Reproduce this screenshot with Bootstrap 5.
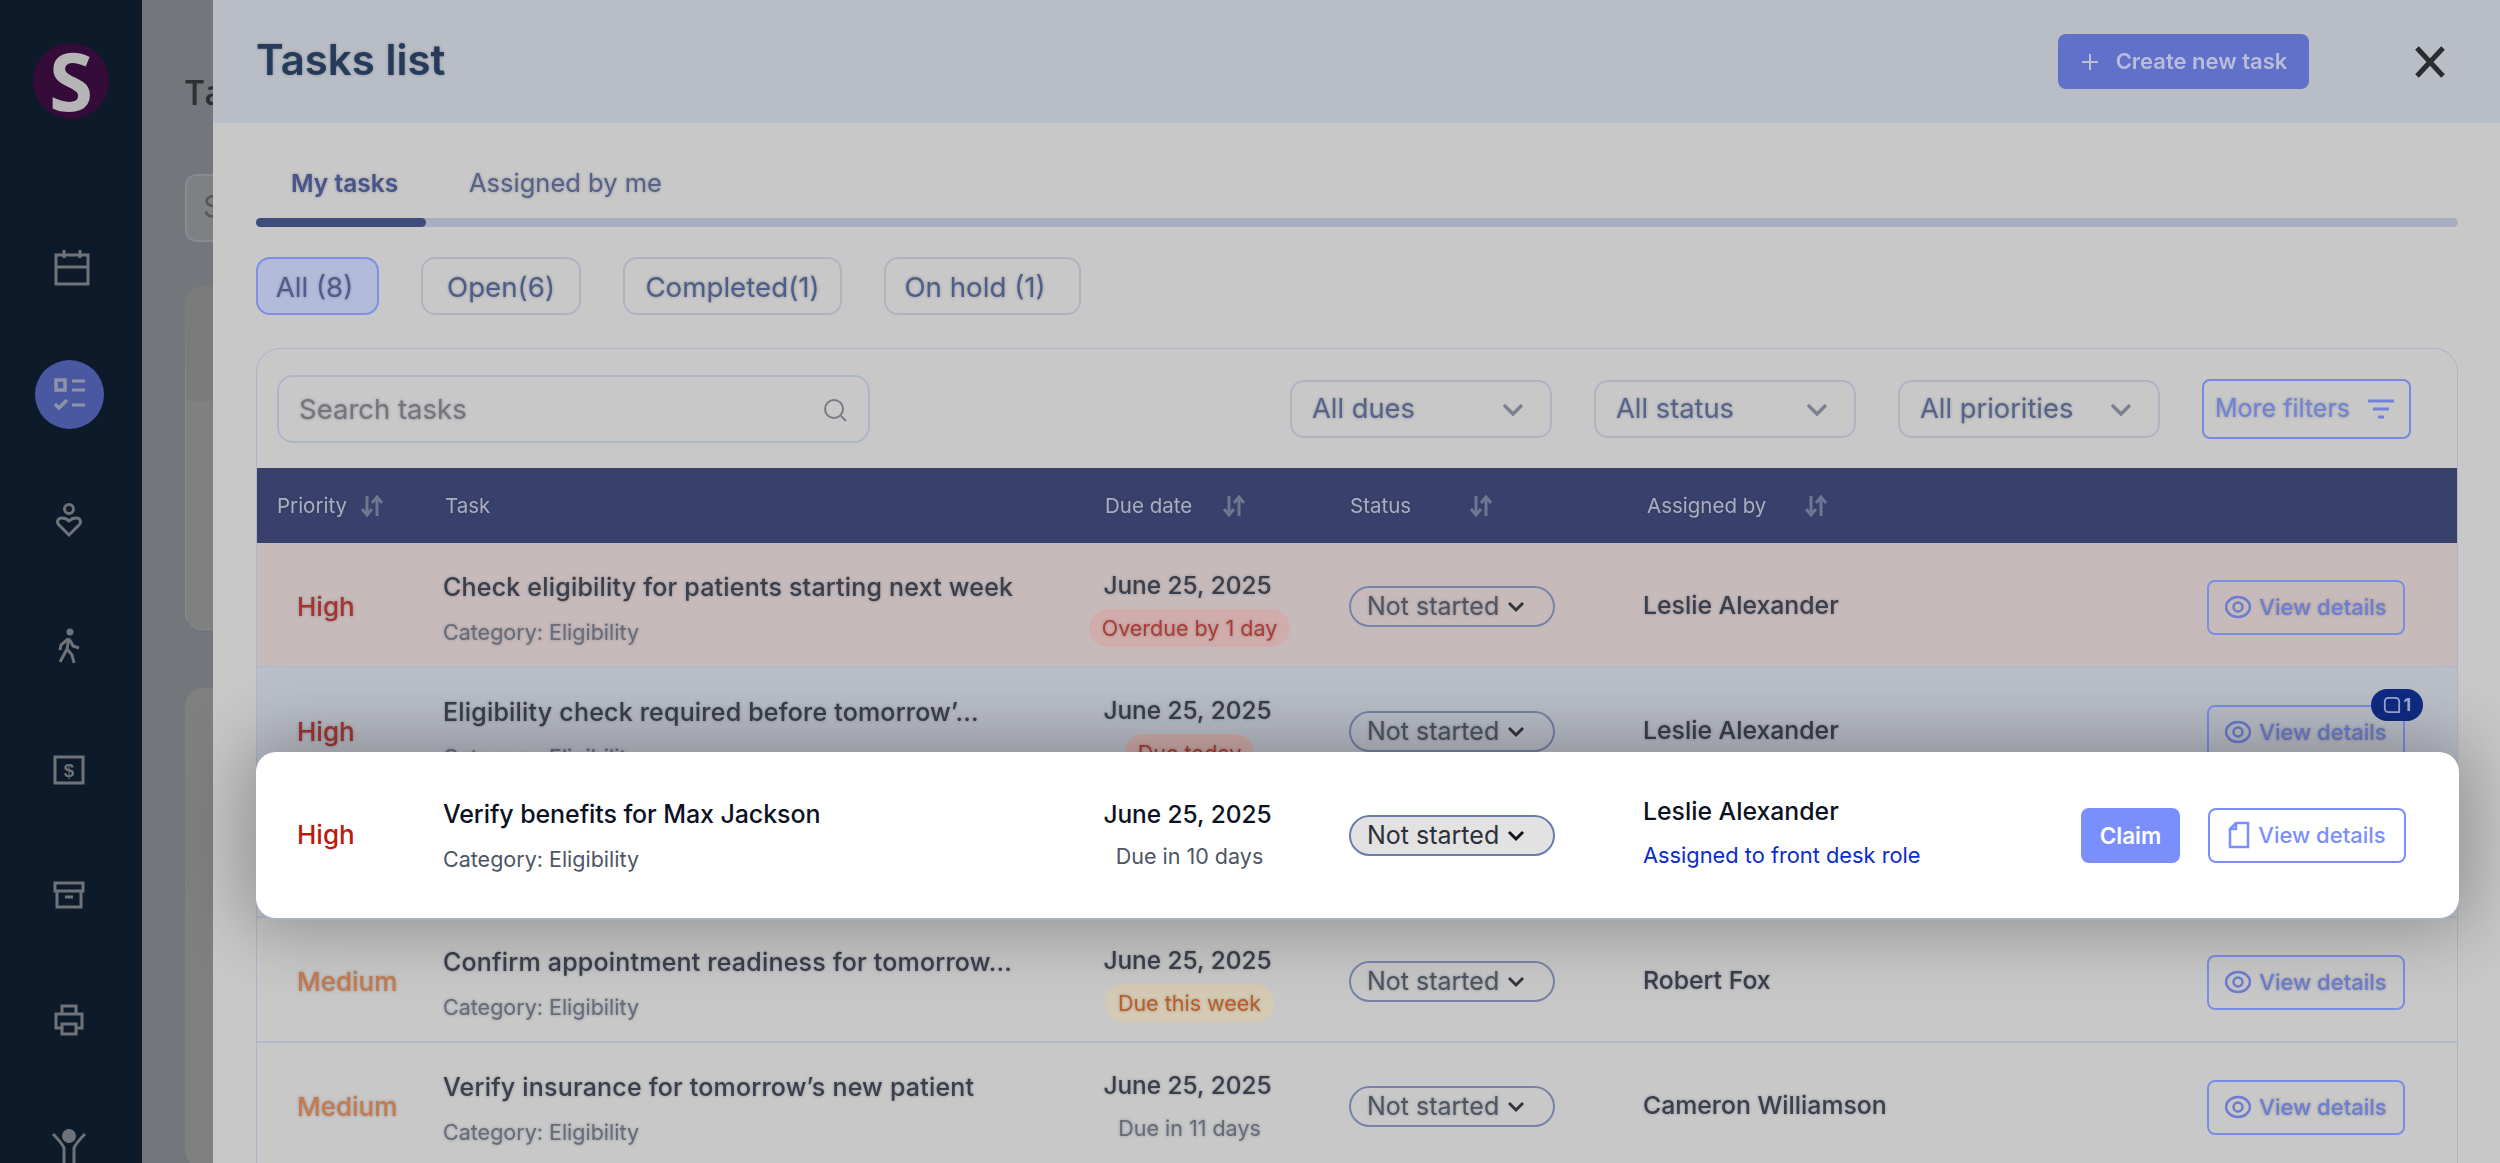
<!DOCTYPE html>
<html lang="en"><head><meta charset="utf-8"><title>Tasks list</title>
<link href="https://cdn.jsdelivr.net/npm/bootstrap@5.3.0/dist/css/bootstrap.min.css" rel="stylesheet">
<style>
html,body{height:1163px;overflow:hidden;background:#c8c8c8}
body{font-family:"Inter","Liberation Sans",sans-serif;color:#3d4350}
.scene{position:relative;width:2500px;height:1163px;overflow:hidden}
.dimmed{position:absolute;left:0;right:0;top:0;bottom:-12px;filter:blur(.7px);display:flex}
.side{width:142px;flex:none;background:#0c1a2a;color:#6e7379;position:relative;height:1175px}
.side-item{position:absolute;left:0;width:138px;display:flex;justify-content:center}
.cal-item{left:3px}
.logo{position:absolute;left:33px;top:43px;width:76px;height:76px;border-radius:50%;background:#350b3a;color:#b5b5b5;font:700 80px/74px "Open Sans",sans-serif;text-align:center}
.active-dot{position:absolute;left:35px;top:360px;width:69px;height:69px;border-radius:50%;background:#4a58a2;display:flex;align-items:center;justify-content:center}
.under{flex:1;background:#73777c;padding:74px 0 0 43px;color:#2e3033}
.under h2{font:600 34px/36px "Open Sans",sans-serif;margin:0}
.under-box{width:500px;height:68px;margin-top:64px;background:#7f8083;border:2px solid #888b8f;border-radius:12px;padding:8px 16px;font-size:30px;color:#55585c}
.under-card{width:500px;height:344px;margin-top:44px;background:#808080;border-radius:18px;border:1px solid #888b90;border-top-width:115px;border-top-color:#7b7b7c}
.under-card2{width:500px;height:480px;margin-top:58px;background:#808080;border-radius:18px}
.panel{position:absolute;left:213px;top:0;right:0;bottom:0;background:#c8c8c8;text-shadow:0 0 3px rgba(50,56,75,.4)}
.panel-head{height:123px;background:#b8bdc6;padding:0 55px 0 43px}
.panel-title{font:600 42px/48px "Inter",sans-serif;color:#263b59;margin:0 0 3px}
.create-btn{width:251px;height:55px;background:#6170c8;border:0;border-radius:8px;color:#b9bdd8;font:600 22px/55px "Inter",sans-serif;padding:0;margin-right:106px}
.close-x{color:#2a2c2f;display:flex}
.panel-body{padding:0 42px 0 43px}
.tab-row{padding-top:38px;height:95px}
.tab-item{font-size:25.5px;line-height:44px;color:#56628a;padding-left:35px;white-space:nowrap}
.tab-item.tab-on{font-weight:600;font-size:24.5px;color:#47558a;width:178px}
.track{height:9px;border-radius:5px;background:#a8aebf;margin-bottom:30px}
.track i{display:block;width:170px;height:9px;border-radius:5px;background:#3f4c7c}
.chips{gap:42px;margin-bottom:33px}
.chip{height:58px;border:2px solid #b0b4c0;border-radius:14px;background:transparent;font-size:27.7px;color:#4e5e8a;line-height:56px;text-align:center;white-space:nowrap}
.chip-all{width:123px;background:#b3bbdb;border-color:#7f90e2;padding-right:6px}
.chip-open{width:160px}
.chip-done{width:219px}
.chip-hold{width:197px;padding-right:15px}
.tbox{border:1px solid #aeb5ca;border-bottom:0;border-radius:24px 24px 0 0;height:900px}
.toolbar{height:119px;padding:0 46px 0 20px}
.searchbox{width:593px;height:68px;border:2px solid #aeb5c9;border-radius:16px;padding:2px 20px 0;font-size:27.5px;color:#74767c;margin-right:auto}
.selectbox{width:262px;height:58px;border:2px solid #b0b4c0;border-radius:14px;padding:2px 26px 0 20px;font-size:27.3px;color:#56648a;margin-right:42px;white-space:nowrap}
.filter-btn{width:209px;height:60px;border:2px solid #7788e0;border-radius:8px;padding:0 14px 0 11px;font-size:25px;color:#7082da;white-space:nowrap}
.task-grid{display:grid;grid-template-columns:185px 618px 258px 325px 1fr;align-items:center}
.thead{height:75px;background:#38416b;color:#a9aebf;font-size:20.5px;padding-top:2px}
.hd-priority{padding-left:20px}
.hd-task{padding-left:3px}
.hd-due{padding-left:45px}
.hd-status{padding-left:32px}
.hd-assigned{padding-left:4px}
.sort{margin-left:13px;vertical-align:-4px;color:#6f7690}
.hd-due .sort{margin-left:30px}
.hd-status .sort{margin-left:58px}
.hd-assigned .sort{margin-left:38px}
.trow{height:125px;border-bottom:2px solid #b4bacc;padding-top:3px}
.tint-red{background:#c7baba}
.tint-blue{background:#bbbfc8}
.prio{padding:2px 0 0 40px;font:500 26px/30px "Inter",sans-serif}
.prio-high{color:#a8342d}
.prio-med{color:#c87a4c}
.tcell{padding:6px 0 0 1px}
.tname{font-size:25px;letter-spacing:.2px;line-height:30px;font-weight:500;color:#3a3f4b;margin-bottom:15px;white-space:nowrap}
.tcat{font-size:21.5px;line-height:30px;color:#666c79}
.dcell{text-align:center;padding-top:4px;padding-right:3px}
.ddate{font-size:24.4px;line-height:30px;font-weight:500;color:#3a3f4b;margin-bottom:9px}
.dnote{display:inline-block;font-size:21.5px;line-height:38px;padding:0 13px;border-radius:19px;white-space:nowrap;color:#666c79;margin-left:4px}
.note-red{background:#d0adab;color:#b03a34}
.note-orange{background:#d5cab4;color:#bd5f24}
.scell{padding-left:32px}
.statuspill{display:inline-flex;align-items:center;width:206px;height:41px;border:2px solid #7783a8;border-radius:21px;padding:2px 0 0 16px;font-size:25px;color:#4f5561;margin-left:-1px;white-space:nowrap}
.statuspill svg{margin-left:8px}
.acell{padding-right:52px;display:flex;align-items:center;justify-content:space-between}
.aname{font-size:24.8px;line-height:30px;font-weight:500;color:#3a3f4b;white-space:nowrap}
.trow .aname{margin-top:-3px}
.detail-btn{position:relative;display:flex;align-items:center;justify-content:center;gap:8px;width:198px;height:55px;border:2px solid #7b8ee6;border-radius:8px;color:#6d7dcf;font-size:22px;font-weight:500;white-space:nowrap}
.trow .detail-btn{margin-top:2px}
.msg-badge{position:absolute;right:-20px;top:-18px;width:52px;height:32px;border-radius:16px;background:#0f2b84;color:#9da9d2;font-size:18px;font-weight:700;display:flex;align-items:center;justify-content:center;gap:3px}
.spot{position:absolute;left:256px;top:752px;width:2203px;height:166px;background:#fff;border-radius:20px;box-shadow:0 2px 0 #a9b0c4,0 0 70px 12px rgba(0,0,0,.28)}
.spot .task-grid{height:166px;margin-left:1px}
.spot .prio{color:#bd1a0e;padding:0 0 0 40px}
.spot .tcell{padding-top:3px}
.spot .tname{letter-spacing:-.1px}
.spot .tname,.spot .ddate,.spot .aname{color:#0c1224}
.spot .tcat,.spot .dnote{color:#4d5565}
.spot .dcell{padding-top:3px}
.spot .ddate{margin-bottom:8px}
.spot .statuspill{background:#e2e2e2;border-color:#6c7dab;color:#2c3038}
.spot .detail-btn{color:#7b8efc;border-color:#7b8efc;background:#fff}
.spot .acell{padding-right:53px}
.spot .stack{padding-bottom:4px}
.assign-note{font-size:21.8px;line-height:30px;color:#0a2bcb;margin-top:14px;white-space:nowrap}
.claim-btn{width:99px;height:55px;background:#7b8ffc;border-radius:8px;color:#fff;font-size:22.5px;font-weight:600;line-height:55px;text-align:center;margin-right:28px}
</style></head>
<body>
<div class="scene">
 <div class="dimmed">
  <aside class="side">
   <div class="logo">S</div>
   <div class="side-item cal-item" style="top:250px"><svg width="38" height="36" viewBox="0 0 38 36" fill="none" stroke="currentColor" stroke-width="3"><rect x="3" y="5" width="32" height="29"/><path d="M3 17h32M11 0v8M27 0v8"/></svg></div>
   <div class="active-dot"><svg width="34" height="34" viewBox="0 0 34 34" fill="none" stroke="#8e93a8" stroke-width="3"><rect x="3" y="2" width="9" height="10" stroke-width="3.5"/><path d="M19 3h13M19 12h13M19 27h13"/><path d="M2 26l4 4 8-8" stroke-width="3.5"/></svg></div>
   <div class="side-item" style="top:503px"><svg width="26" height="34" viewBox="0 0 26 34" fill="none" stroke="currentColor" stroke-width="3"><circle cx="13" cy="6" r="4.5"/><path d="M13 32L3 22c-3-3-1-7 3-7 3 0 5 1 7 3 2-2 4-3 7-3 4 0 6 4 3 7z"/></svg></div>
   <div class="side-item" style="top:628px"><svg width="24" height="36" viewBox="0 0 24 36" fill="none" stroke="currentColor" stroke-width="3"><circle cx="13" cy="4" r="3.5" fill="currentColor" stroke="none"/><path d="M12 10l-2 11 5 6 2 8M10 21l-7 13M11 11l-7 6-1 5M13 12l3 6 6 2"/></svg></div>
   <div class="side-item" style="top:755px"><svg width="32" height="30" viewBox="0 0 32 30" fill="none" stroke="currentColor" stroke-width="3"><rect x="2" y="2" width="28" height="26"/><text x="16" y="22" text-anchor="middle" font-size="19" font-weight="700" fill="currentColor" stroke="none" font-family="Liberation Sans">$</text></svg></div>
   <div class="side-item" style="top:881px"><svg width="32" height="28" viewBox="0 0 32 28" fill="none" stroke="currentColor" stroke-width="3"><rect x="2" y="2" width="28" height="8"/><path d="M4 10v16h24V10M12 16h8"/></svg></div>
   <div class="side-item" style="top:1004px"><svg width="32" height="32" viewBox="0 0 32 32" fill="none" stroke="currentColor" stroke-width="3"><path d="M9 10V2h14v8M9 24H3V10h26v14h-6"/><rect x="9" y="20" width="14" height="10"/></svg></div>
   <div class="side-item" style="top:1128px"><svg width="36" height="40" viewBox="0 0 36 40" fill="none" stroke="currentColor" stroke-width="3"><circle cx="18" cy="8" r="7" fill="currentColor" stroke="none"/><path d="M2 6c5 5 9 9 11 14v20M34 6c-5 5-9 9-11 14v20"/></svg></div>
  </aside>
  <main class="under">
   <h2>Tasks</h2>
   <div class="under-box">S</div>
   <div class="under-card"></div>
   <div class="under-card2"></div>
  </main>
  <section class="panel">
   <header class="panel-head d-flex align-items-center">
    <h1 class="panel-title me-auto">Tasks list</h1>
    <button class="create-btn d-flex align-items-center justify-content-center gap-3" type="button"><svg width="20" height="20" viewBox="0 0 20 20" stroke="currentColor" stroke-width="2"><path d="M10 2v16M2 10h16"/></svg>Create new task</button>
    <span class="close-x"><svg width="30" height="32" viewBox="0 0 30 32" stroke="currentColor" stroke-width="5"><path d="M2 2l26 28M28 2L2 30"/></svg></span>
   </header>
   <div class="panel-body">
    <div class="tab-row d-flex align-items-start">
     <div class="tab-item tab-on">My tasks</div><div class="tab-item">Assigned by me</div>
    </div>
    <div class="track"><i></i></div>
    <div class="chips d-flex">
     <div class="chip chip-all">All (8)</div><div class="chip chip-open">Open(6)</div><div class="chip chip-done">Completed(1)</div><div class="chip chip-hold">On hold (1)</div>
    </div>
    <div class="tbox">
     <div class="toolbar d-flex align-items-center">
      <div class="searchbox d-flex align-items-center justify-content-between">Search tasks<svg width="26" height="26" viewBox="0 0 26 26" fill="none" stroke="#777b84" stroke-width="2"><circle cx="12" cy="12" r="9"/><path d="M19 19l5 5"/></svg></div>
      <div class="selectbox d-flex align-items-center justify-content-between">All dues<svg width="22" height="14" viewBox="0 0 22 14" fill="none" stroke="#7a8192" stroke-width="3.5"><path d="M2 2l9 9 9-9"/></svg></div>
      <div class="selectbox d-flex align-items-center justify-content-between">All status<svg width="22" height="14" viewBox="0 0 22 14" fill="none" stroke="#7a8192" stroke-width="3.5"><path d="M2 2l9 9 9-9"/></svg></div>
      <div class="selectbox d-flex align-items-center justify-content-between">All priorities<svg width="22" height="14" viewBox="0 0 22 14" fill="none" stroke="#7a8192" stroke-width="3.5"><path d="M2 2l9 9 9-9"/></svg></div>
      <div class="filter-btn d-flex align-items-center justify-content-between">More filters<svg width="28" height="20" viewBox="0 0 28 20" fill="none" stroke="currentColor" stroke-width="3"><path d="M1 2h26M6 10h16M11 18h6"/></svg></div>
     </div>
     <div class="task-grid thead">
      <div class="hd-priority">Priority<svg class="sort" width="24" height="22" viewBox="0 0 24 22" fill="none" stroke="currentColor" stroke-width="3"><path d="M7 1v18M2 14l5 6 5-6M17 21V3M12 8l5-6 5 6"/></svg></div>
      <div class="hd-task">Task</div>
      <div class="hd-due">Due date<svg class="sort" width="24" height="22" viewBox="0 0 24 22" fill="none" stroke="currentColor" stroke-width="3"><path d="M7 1v18M2 14l5 6 5-6M17 21V3M12 8l5-6 5 6"/></svg></div>
      <div class="hd-status">Status<svg class="sort" width="24" height="22" viewBox="0 0 24 22" fill="none" stroke="currentColor" stroke-width="3"><path d="M7 1v18M2 14l5 6 5-6M17 21V3M12 8l5-6 5 6"/></svg></div>
      <div class="hd-assigned">Assigned by<svg class="sort" width="24" height="22" viewBox="0 0 24 22" fill="none" stroke="currentColor" stroke-width="3"><path d="M7 1v18M2 14l5 6 5-6M17 21V3M12 8l5-6 5 6"/></svg></div>
     </div>
     <div class="task-grid trow tint-red">
      <div class="prio prio-high">High</div>
      <div class="tcell"><div class="tname">Check eligibility for patients starting next week</div><div class="tcat">Category: Eligibility</div></div>
      <div class="dcell"><div class="ddate">June 25, 2025</div><span class="dnote note-red">Overdue by 1 day</span></div>
      <div class="scell"><span class="statuspill">Not started<svg width="18" height="12" viewBox="0 0 18 12" fill="none" stroke="#33363d" stroke-width="3"><path d="M2 2l7 7 7-7"/></svg></span></div>
      <div class="acell"><div class="aname">Leslie Alexander</div><div class="detail-btn"><svg width="26" height="24" viewBox="0 0 26 24" fill="none" stroke="currentColor" stroke-width="2.5"><ellipse cx="13" cy="12" rx="12" ry="10"/><circle cx="13" cy="12" r="4.5"/></svg>View details</div></div>
     </div>
     <div class="task-grid trow tint-blue">
      <div class="prio prio-high">High</div>
      <div class="tcell"><div class="tname">Eligibility check required before tomorrow’...</div><div class="tcat">Category: Eligibility</div></div>
      <div class="dcell"><div class="ddate">June 25, 2025</div><span class="dnote note-red">Due today</span></div>
      <div class="scell"><span class="statuspill">Not started<svg width="18" height="12" viewBox="0 0 18 12" fill="none" stroke="#33363d" stroke-width="3"><path d="M2 2l7 7 7-7"/></svg></span></div>
      <div class="acell"><div class="aname">Leslie Alexander</div><div class="detail-btn"><svg width="26" height="24" viewBox="0 0 26 24" fill="none" stroke="currentColor" stroke-width="2.5"><ellipse cx="13" cy="12" rx="12" ry="10"/><circle cx="13" cy="12" r="4.5"/></svg>View details<span class="msg-badge"><svg width="18" height="18" viewBox="0 0 20 20" fill="none" stroke="currentColor" stroke-width="2"><path d="M6 2h8a4 4 0 0 1 4 4v12H6a4 4 0 0 1-4-4V6a4 4 0 0 1 4-4z"/><path d="M7 10h.1M13 10h.1"/></svg>1</span></div></div>
     </div>
     <div class="trow"></div>
     <div class="task-grid trow">
      <div class="prio prio-med">Medium</div>
      <div class="tcell"><div class="tname">Confirm appointment readiness for tomorrow...</div><div class="tcat">Category: Eligibility</div></div>
      <div class="dcell"><div class="ddate">June 25, 2025</div><span class="dnote note-orange">Due this week</span></div>
      <div class="scell"><span class="statuspill">Not started<svg width="18" height="12" viewBox="0 0 18 12" fill="none" stroke="#33363d" stroke-width="3"><path d="M2 2l7 7 7-7"/></svg></span></div>
      <div class="acell"><div class="aname">Robert Fox</div><div class="detail-btn"><svg width="26" height="24" viewBox="0 0 26 24" fill="none" stroke="currentColor" stroke-width="2.5"><ellipse cx="13" cy="12" rx="12" ry="10"/><circle cx="13" cy="12" r="4.5"/></svg>View details</div></div>
     </div>
     <div class="task-grid trow">
      <div class="prio prio-med">Medium</div>
      <div class="tcell"><div class="tname">Verify insurance for tomorrow’s new patient</div><div class="tcat">Category: Eligibility</div></div>
      <div class="dcell"><div class="ddate">June 25, 2025</div><span class="dnote">Due in 11 days</span></div>
      <div class="scell"><span class="statuspill">Not started<svg width="18" height="12" viewBox="0 0 18 12" fill="none" stroke="#33363d" stroke-width="3"><path d="M2 2l7 7 7-7"/></svg></span></div>
      <div class="acell"><div class="aname">Cameron Williamson</div><div class="detail-btn"><svg width="26" height="24" viewBox="0 0 26 24" fill="none" stroke="currentColor" stroke-width="2.5"><ellipse cx="13" cy="12" rx="12" ry="10"/><circle cx="13" cy="12" r="4.5"/></svg>View details</div></div>
     </div>
    </div>
   </div>
  </section>
 </div>
 <div class="spot">
  <div class="task-grid">
   <div class="prio">High</div>
   <div class="tcell"><div class="tname">Verify benefits for Max Jackson</div><div class="tcat">Category: Eligibility</div></div>
   <div class="dcell"><div class="ddate">June 25, 2025</div><span class="dnote">Due in 10 days</span></div>
   <div class="scell"><span class="statuspill">Not started<svg width="18" height="12" viewBox="0 0 18 12" fill="none" stroke="#11141a" stroke-width="3"><path d="M2 2l7 7 7-7"/></svg></span></div>
   <div class="acell"><div class="stack"><div class="aname">Leslie Alexander</div><div class="assign-note">Assigned to front desk role</div></div>
    <div class="d-flex align-items-center"><div class="claim-btn">Claim</div><div class="detail-btn"><svg width="22" height="28" viewBox="0 0 22 28" fill="none" stroke="currentColor" stroke-width="2.5"><path d="M8 2h12v24H2V8zM8 2v6H2"/></svg>View details</div></div></div>
  </div>
 </div>
</div>
<script src="https://cdn.jsdelivr.net/npm/bootstrap@5.3.0/dist/js/bootstrap.bundle.min.js"></script>
</body></html>
